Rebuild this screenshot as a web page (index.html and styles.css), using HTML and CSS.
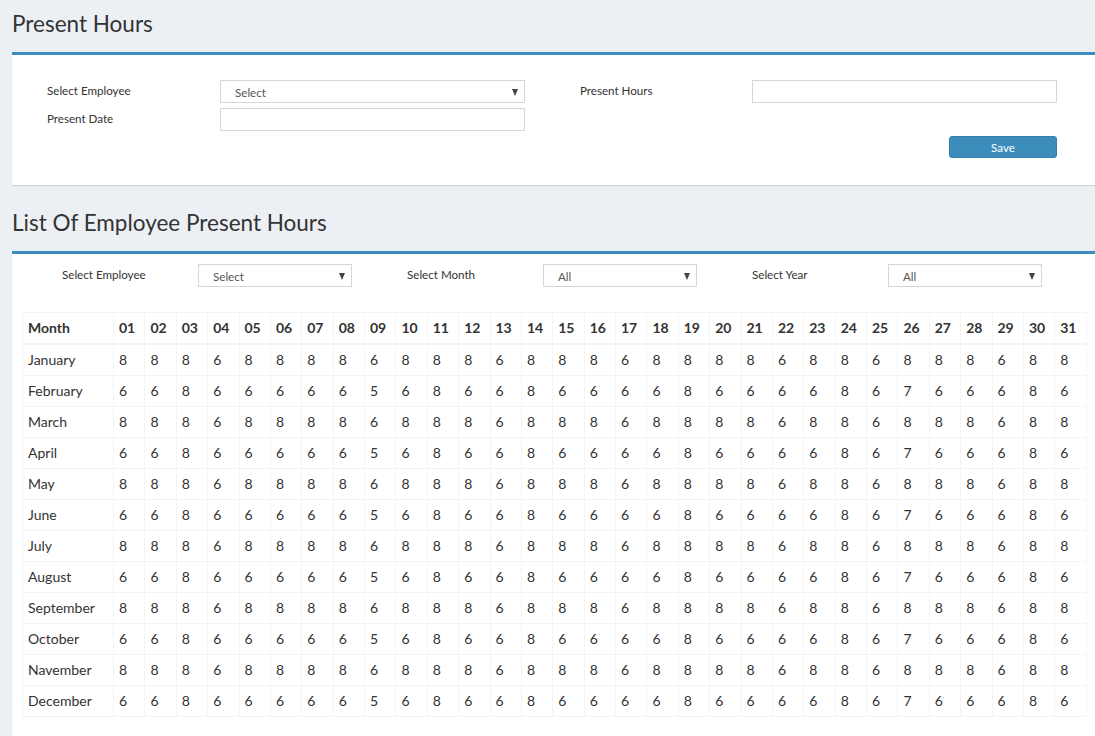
FILE: index.html
```html
<!DOCTYPE html>
<html lang="en">
<head>
<meta charset="utf-8">
<title>Present Hours</title>
<link rel="stylesheet" href="styles.css">
</head>
<body>
<div class="page">
  <header class="content-header"><h1>Present Hours</h1></header>
  <section class="box">
    <div class="box-body form-body">
      <div class="form-grid">
        <label class="lbl">Select Employee</label>
        <div class="select"><span>Select</span></div>
        <span class="spacer"></span>
        <label class="lbl">Present Hours</label>
        <div class="input"></div>

        <label class="lbl">Present Date</label>
        <div class="input"></div>
        <span class="spacer"></span>
        <span></span>
        <span></span>

        <span></span><span></span><span></span><span></span>
        <button class="btn">Save</button>
      </div>
    </div>
  </section>

  <header class="content-header"><h1>List Of Employee Present Hours</h1></header>
  <section class="box box-list">
    <div class="box-body">
      <div class="filter-grid">
        <label class="lbl">Select Employee</label>
        <div class="select"><span>Select</span></div>
        <span></span>
        <label class="lbl">Select Month</label>
        <div class="select"><span>All</span></div>
        <span></span>
        <label class="lbl">Select Year</label>
        <div class="select"><span>All</span></div>
      </div>
      <table class="hours">
        <colgroup><col class="col-month"></colgroup>
        <thead>
          <tr><th>Month</th><th>01</th><th>02</th><th>03</th><th>04</th><th>05</th><th>06</th><th>07</th><th>08</th><th>09</th><th>10</th><th>11</th><th>12</th><th>13</th><th>14</th><th>15</th><th>16</th><th>17</th><th>18</th><th>19</th><th>20</th><th>21</th><th>22</th><th>23</th><th>24</th><th>25</th><th>26</th><th>27</th><th>28</th><th>29</th><th>30</th><th>31</th></tr>
        </thead>
        <tbody>
          <tr><td>January</td><td>8</td><td>8</td><td>8</td><td>6</td><td>8</td><td>8</td><td>8</td><td>8</td><td>6</td><td>8</td><td>8</td><td>8</td><td>6</td><td>8</td><td>8</td><td>8</td><td>6</td><td>8</td><td>8</td><td>8</td><td>8</td><td>6</td><td>8</td><td>8</td><td>6</td><td>8</td><td>8</td><td>8</td><td>6</td><td>8</td><td>8</td></tr>
          <tr><td>February</td><td>6</td><td>6</td><td>8</td><td>6</td><td>6</td><td>6</td><td>6</td><td>6</td><td>5</td><td>6</td><td>8</td><td>6</td><td>6</td><td>8</td><td>6</td><td>6</td><td>6</td><td>6</td><td>8</td><td>6</td><td>6</td><td>6</td><td>6</td><td>8</td><td>6</td><td>7</td><td>6</td><td>6</td><td>6</td><td>8</td><td>6</td></tr>
          <tr><td>March</td><td>8</td><td>8</td><td>8</td><td>6</td><td>8</td><td>8</td><td>8</td><td>8</td><td>6</td><td>8</td><td>8</td><td>8</td><td>6</td><td>8</td><td>8</td><td>8</td><td>6</td><td>8</td><td>8</td><td>8</td><td>8</td><td>6</td><td>8</td><td>8</td><td>6</td><td>8</td><td>8</td><td>8</td><td>6</td><td>8</td><td>8</td></tr>
          <tr><td>April</td><td>6</td><td>6</td><td>8</td><td>6</td><td>6</td><td>6</td><td>6</td><td>6</td><td>5</td><td>6</td><td>8</td><td>6</td><td>6</td><td>8</td><td>6</td><td>6</td><td>6</td><td>6</td><td>8</td><td>6</td><td>6</td><td>6</td><td>6</td><td>8</td><td>6</td><td>7</td><td>6</td><td>6</td><td>6</td><td>8</td><td>6</td></tr>
          <tr><td>May</td><td>8</td><td>8</td><td>8</td><td>6</td><td>8</td><td>8</td><td>8</td><td>8</td><td>6</td><td>8</td><td>8</td><td>8</td><td>6</td><td>8</td><td>8</td><td>8</td><td>6</td><td>8</td><td>8</td><td>8</td><td>8</td><td>6</td><td>8</td><td>8</td><td>6</td><td>8</td><td>8</td><td>8</td><td>6</td><td>8</td><td>8</td></tr>
          <tr><td>June</td><td>6</td><td>6</td><td>8</td><td>6</td><td>6</td><td>6</td><td>6</td><td>6</td><td>5</td><td>6</td><td>8</td><td>6</td><td>6</td><td>8</td><td>6</td><td>6</td><td>6</td><td>6</td><td>8</td><td>6</td><td>6</td><td>6</td><td>6</td><td>8</td><td>6</td><td>7</td><td>6</td><td>6</td><td>6</td><td>8</td><td>6</td></tr>
          <tr><td>July</td><td>8</td><td>8</td><td>8</td><td>6</td><td>8</td><td>8</td><td>8</td><td>8</td><td>6</td><td>8</td><td>8</td><td>8</td><td>6</td><td>8</td><td>8</td><td>8</td><td>6</td><td>8</td><td>8</td><td>8</td><td>8</td><td>6</td><td>8</td><td>8</td><td>6</td><td>8</td><td>8</td><td>8</td><td>6</td><td>8</td><td>8</td></tr>
          <tr><td>August</td><td>6</td><td>6</td><td>8</td><td>6</td><td>6</td><td>6</td><td>6</td><td>6</td><td>5</td><td>6</td><td>8</td><td>6</td><td>6</td><td>8</td><td>6</td><td>6</td><td>6</td><td>6</td><td>8</td><td>6</td><td>6</td><td>6</td><td>6</td><td>8</td><td>6</td><td>7</td><td>6</td><td>6</td><td>6</td><td>8</td><td>6</td></tr>
          <tr><td>September</td><td>8</td><td>8</td><td>8</td><td>6</td><td>8</td><td>8</td><td>8</td><td>8</td><td>6</td><td>8</td><td>8</td><td>8</td><td>6</td><td>8</td><td>8</td><td>8</td><td>6</td><td>8</td><td>8</td><td>8</td><td>8</td><td>6</td><td>8</td><td>8</td><td>6</td><td>8</td><td>8</td><td>8</td><td>6</td><td>8</td><td>8</td></tr>
          <tr><td>October</td><td>6</td><td>6</td><td>8</td><td>6</td><td>6</td><td>6</td><td>6</td><td>6</td><td>5</td><td>6</td><td>8</td><td>6</td><td>6</td><td>8</td><td>6</td><td>6</td><td>6</td><td>6</td><td>8</td><td>6</td><td>6</td><td>6</td><td>6</td><td>8</td><td>6</td><td>7</td><td>6</td><td>6</td><td>6</td><td>8</td><td>6</td></tr>
          <tr><td>Navember</td><td>8</td><td>8</td><td>8</td><td>6</td><td>8</td><td>8</td><td>8</td><td>8</td><td>6</td><td>8</td><td>8</td><td>8</td><td>6</td><td>8</td><td>8</td><td>8</td><td>6</td><td>8</td><td>8</td><td>8</td><td>8</td><td>6</td><td>8</td><td>8</td><td>6</td><td>8</td><td>8</td><td>8</td><td>6</td><td>8</td><td>8</td></tr>
          <tr><td>December</td><td>6</td><td>6</td><td>8</td><td>6</td><td>6</td><td>6</td><td>6</td><td>6</td><td>5</td><td>6</td><td>8</td><td>6</td><td>6</td><td>8</td><td>6</td><td>6</td><td>6</td><td>6</td><td>8</td><td>6</td><td>6</td><td>6</td><td>6</td><td>8</td><td>6</td><td>7</td><td>6</td><td>6</td><td>6</td><td>8</td><td>6</td></tr>
        </tbody>
      </table>
    </div>
  </section>
</div>
</body>
</html>
```

FILE: styles.css
```css
html {
  overflow: hidden;
}
body {
  margin: 0;
  background: #ecf0f5;
  color: #333;
  font-family: Lato, "Source Sans Pro", "Liberation Sans", sans-serif;
  font-size: 14px;
}
.page {
  padding-left: 12px;
}
.content-header {
  padding: 10px 0 14px 0;
}
.content-header h1 {
  margin: 0;
  font-size: 22.5px;
  font-weight: 400;
  line-height: 28px;
  color: #333;
}
.box {
  background: #fff;
  border-top: 3px solid #3c8dbc;
  box-shadow: 0 1px 1px rgba(0, 0, 0, 0.12);
  margin-right: -2px;
  margin-bottom: 14px;
}
.box-list {
  margin-bottom: 0;
  min-height: 600px;
}
.box-body {
  padding: 10px;
}
.form-body {
  padding: 25px 10px 27px 35px;
}
.form-grid {
  display: grid;
  grid-template-columns: 173px 305px 55px 172px 305px;
  grid-template-rows: 23px 23px 22px;
  row-gap: 5px;
  align-items: center;
}
.filter-grid {
  display: grid;
  grid-template-columns: 136px 154px 55px 136px 154px 55px 136px 154px;
  grid-auto-rows: 23px;
  align-items: center;
  padding-left: 40px;
}
.lbl {
  font-size: 11.6px;
  color: #333;
  line-height: 16px;
  padding-bottom: 2px;
}
.select,
.input {
  box-sizing: border-box;
  height: 23px;
  border: 1px solid #d2d6de;
  background: #fff;
}
.select {
  position: relative;
  display: flex;
  align-items: center;
  padding-left: 14px;
  font-size: 11.6px;
  color: #555;
}
.select span {
  padding-top: 2px;
}
.select::after {
  content: "";
  position: absolute;
  right: 6px;
  top: 8px;
  border-left: 3.5px solid transparent;
  border-right: 3.5px solid transparent;
  border-top: 7px solid #444;
}
.btn {
  justify-self: end;
  width: 108px;
  height: 22px;
  box-sizing: border-box;
  border: 1px solid #367fa9;
  border-radius: 3px;
  background: #3c8dbc;
  color: #fff;
  font-family: inherit;
  font-size: 11.6px;
  padding: 0;
}
.hours {
  width: 100%;
  margin-top: 25px;
  border-collapse: collapse;
  table-layout: fixed;
  border: 1px solid #f4f4f4;
}
.col-month {
  width: 91px;
}
.hours th,
.hours td {
  border: 1px solid #f4f4f4;
  padding: 5px;
  line-height: 20px;
  text-align: left;
  font-size: 14px;
  white-space: nowrap;
}
.hours th {
  font-weight: 700;
  border-bottom: 2px solid #f4f4f4;
}
```
